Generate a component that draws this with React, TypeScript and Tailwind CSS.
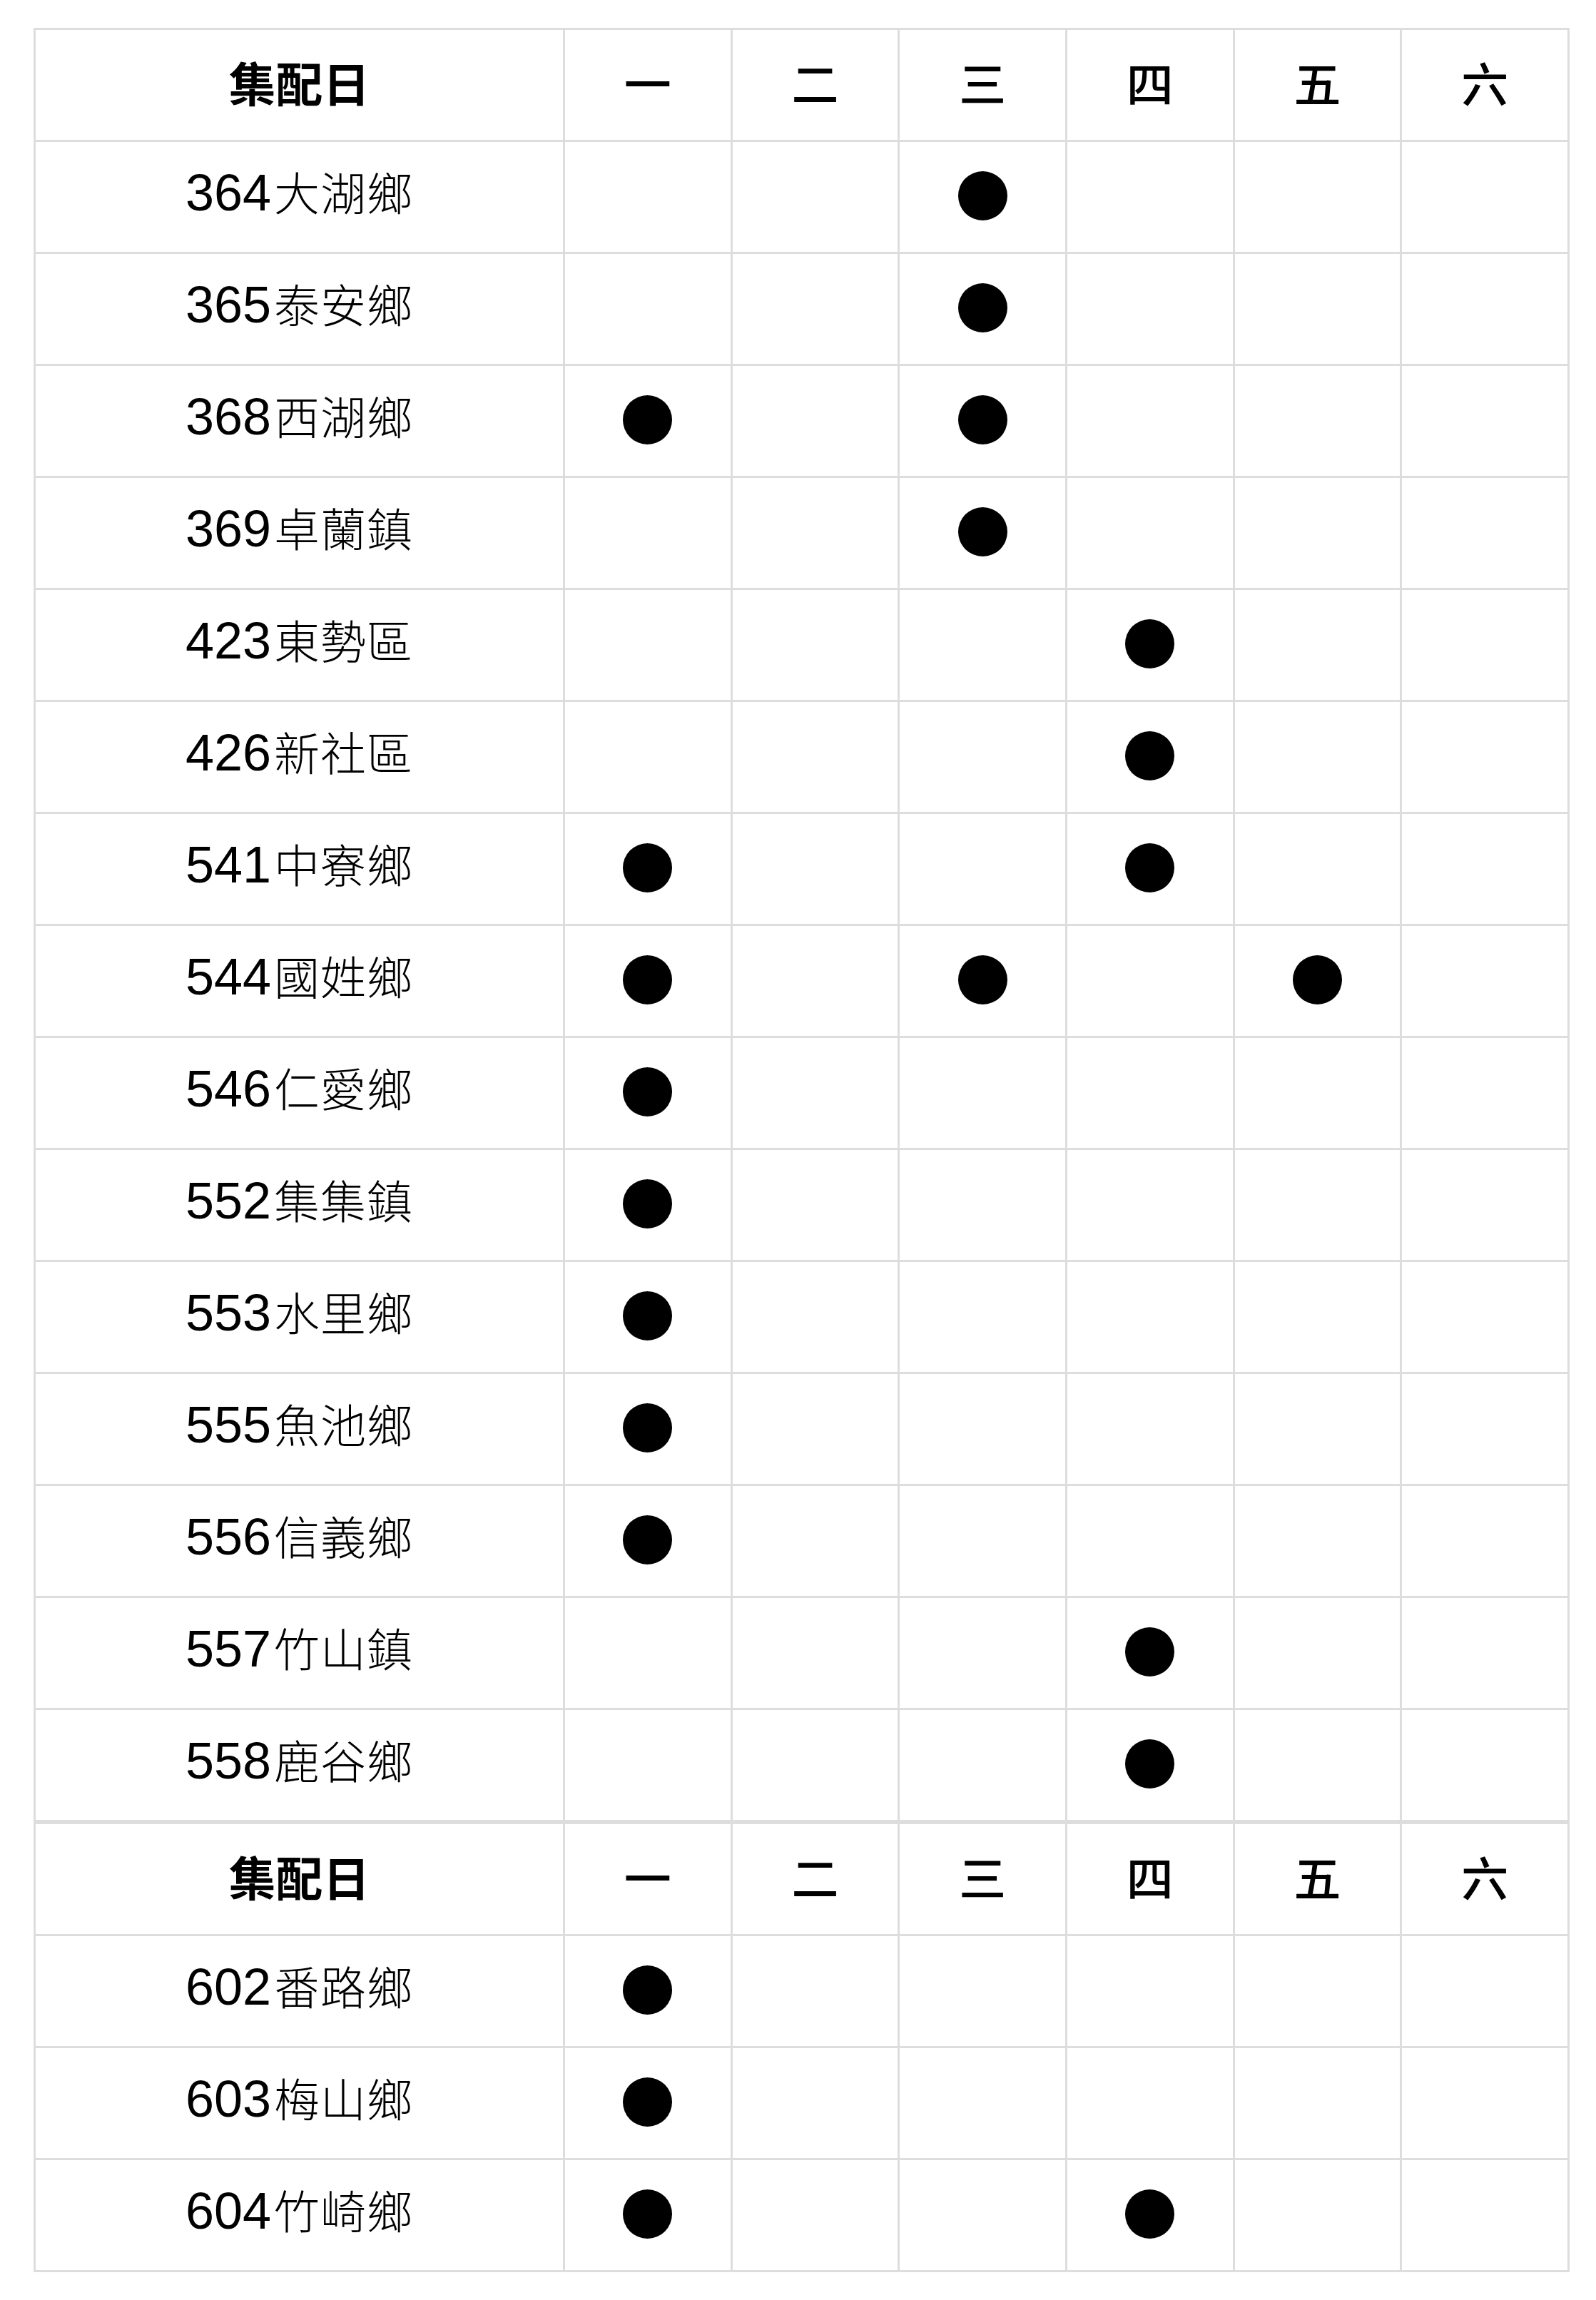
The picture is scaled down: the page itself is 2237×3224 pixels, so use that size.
import React from "react";

const DAYS = ["一", "二", "三", "四", "五", "六"];

type Row = { code: string; name: string; days: number[] };

const first: Row[] = [
  { code: "364", name: "大湖鄉", days: [2] },
  { code: "365", name: "泰安鄉", days: [2] },
  { code: "368", name: "西湖鄉", days: [0, 2] },
  { code: "369", name: "卓蘭鎮", days: [2] },
  { code: "423", name: "東勢區", days: [3] },
  { code: "426", name: "新社區", days: [3] },
  { code: "541", name: "中寮鄉", days: [0, 3] },
  { code: "544", name: "國姓鄉", days: [0, 2, 4] },
  { code: "546", name: "仁愛鄉", days: [0] },
  { code: "552", name: "集集鎮", days: [0] },
  { code: "553", name: "水里鄉", days: [0] },
  { code: "555", name: "魚池鄉", days: [0] },
  { code: "556", name: "信義鄉", days: [0] },
  { code: "557", name: "竹山鎮", days: [3] },
  { code: "558", name: "鹿谷鄉", days: [3] },
];

const second: Row[] = [
  { code: "602", name: "番路鄉", days: [0] },
  { code: "603", name: "梅山鄉", days: [0] },
  { code: "604", name: "竹崎鄉", days: [0, 3] },
];

const cell =
  "h-[157px] border-r-[3px] border-b-[3px] border-[#dddddd] flex items-center justify-center";

function HeaderRow() {
  return (
    <>
      <div className={cell}>
        <span className="pb-[10px] text-[66px] font-bold font-['Noto_Sans_CJK_TC',sans-serif] leading-none">
          集配日
        </span>
      </div>
      {DAYS.map((d) => (
        <div key={d} className={cell}>
          <span className="pb-[10px] text-[66px] font-medium font-['Noto_Sans_CJK_TC',sans-serif] leading-none">
            {d}
          </span>
        </div>
      ))}
    </>
  );
}

function DataRow({ row }: { row: Row }) {
  return (
    <>
      <div className={cell}>
        <span className="pb-[12px] flex items-baseline leading-none">
          <span className="text-[72px] font-['Liberation_Sans',Arial,sans-serif]">
            {row.code}
          </span>
          <span className="ml-[4px] text-[64px] font-light tracking-[1px] font-['Noto_Sans_CJK_TC',sans-serif]">
            {row.name}
          </span>
        </span>
      </div>
      {DAYS.map((d, i) => (
        <div key={d} className={cell}>
          {row.days.includes(i) && (
            <div className="mb-[4px] w-[69px] h-[69px] rounded-full bg-black" />
          )}
        </div>
      ))}
    </>
  );
}

function Schedule({ rows }: { rows: Row[] }) {
  return (
    <div className="grid grid-cols-[742px_repeat(6,1fr)] border-l-[3px] border-t-[3px] border-[#dddddd]">
      <HeaderRow />
      {rows.map((r) => (
        <DataRow key={r.code} row={r} />
      ))}
    </div>
  );
}

export default function App() {
  return (
    <div className="min-h-screen bg-white text-black pt-[39px] pb-[38px]">
      <div className="ml-[47px] w-[2153px]">
        <Schedule rows={first} />
        <Schedule rows={second} />
      </div>
    </div>
  );
}
